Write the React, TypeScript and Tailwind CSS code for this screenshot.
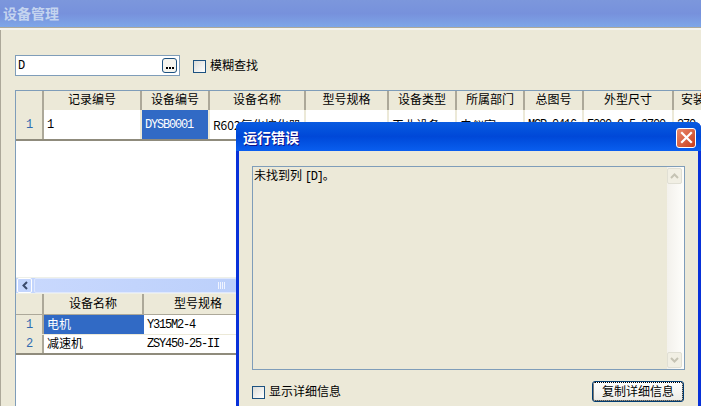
const cjk = "font-['Noto_Sans_CJK_SC','Liberation_Sans',sans-serif] text-[12px] leading-[14px]";
const latin = "font-['Liberation_Mono',monospace] text-[12px] leading-[14px] tracking-[-1.2px]";

const mainColumns = [
  { title: '记录编号', w: 'w-[98px]', value: '1', kind: 'latin' },
  { title: '设备编号', w: 'w-[68px]', value: 'DYSB0001', kind: 'selected' },
  { title: '设备名称', w: 'w-[96px]', value: 'R602氧化控化器', kind: 'cjk' },
  { title: '型号规格', w: 'w-[83px]', value: '', kind: 'cjk' },
  { title: '设备类型', w: 'w-[68px]', value: '工业设备', kind: 'cjk' },
  { title: '所属部门', w: 'w-[68px]', value: '电仪室', kind: 'cjk' },
  { title: '总图号', w: 'w-[59px]', value: 'MCP-0416', kind: 'latin' },
  { title: '外型尺寸', w: 'w-[90px]', value: 'F300.0.5-2700', kind: 'latin' },
  { title: '安装', w: 'w-[40px]', value: '370', kind: 'latin' },
];

const HeaderCell = ({ title, w, pad = 'pb-[2px]' }: { title: string; w: string; pad?: string }) => (
  <div className={`${w} ${pad} shrink-0 h-full flex items-center justify-center border-r-2 border-[#aca899] text-black ${cjk}`}>
    {title}
  </div>
);

const Checkbox = ({ label }: { label: string }) => (
  <div className="flex items-start gap-[4px]">
    <div className="mt-[2px] w-[13px] h-[13px] border border-[#1c5180] bg-gradient-to-br from-[#dcdcd7] to-white" />
    <span className={`${cjk} text-black`}>{label}</span>
  </div>
);

const ScrollArrow = ({ up }: { up: boolean }) => (
  <div className="w-[15px] h-[16px] rounded-[2px] border border-[#e0dfd4] bg-[#f1efe4] flex items-center justify-center">
    <svg width="9" height="6" viewBox="0 0 9 6">
      <path d={up ? 'M1 5 L4.5 1.5 L8 5' : 'M1 1 L4.5 4.5 L8 1'} fill="none" stroke="#c5c3b4" strokeWidth="2" />
    </svg>
  </div>
);

const ErrorDialog = () => (
  <div className="absolute left-[236px] top-[122px] w-[465px] h-[300px] flex flex-col rounded-t-[6px] bg-[#0831d9] overflow-hidden">
    <div className="h-[29px] shrink-0 flex items-center justify-between pl-[7px] pr-[5px] bg-gradient-to-b from-[#0a5be0] via-[#0048d8] to-[#0a5eef]">
      <span className={`${cjk} text-white font-bold text-[14px] [text-shadow:1px_1px_0_#0f1089]`}>运行错误</span>
      <div className="mt-[2px] w-[20px] h-[20px] rounded-[3px] border border-white bg-gradient-to-br from-[#e8886a] to-[#c93a14] flex items-center justify-center">
        <svg width="13" height="13" viewBox="0 0 13 13">
          <path d="M2 2 L11 11 M11 2 L2 11" stroke="white" strokeWidth="2.2" strokeLinecap="square" />
        </svg>
      </div>
    </div>
    <div className="flex-1 mx-[3px] bg-[#ece9d8] pl-[13px] pr-[13px] pt-[15px]">
      <div className="h-[204px] flex border border-[#7f9db9]">
        <div className={`flex-1 pl-[1px] pt-[1px] ${cjk} text-black`}>
          未找到列 <span className={latin}>[D]</span>。
        </div>
        <div className="w-[17px] flex flex-col justify-between items-start py-[1px] bg-gradient-to-r from-[#f3f1ec] to-[#fefefb]">
          <ScrollArrow up />
          <ScrollArrow up={false} />
        </div>
      </div>
      <div className="flex items-center justify-between mt-[11px] pr-[1px]">
        <Checkbox label="显示详细信息" />
        <div className={`w-[92px] h-[21px] rounded-[3px] border border-[#003c74] bg-gradient-to-b from-white to-[#ecebe5] flex items-center justify-center pb-[1px] text-black outline-1 outline-dotted -outline-offset-2 outline-black ${cjk}`}>
          复制详细信息
        </div>
      </div>
    </div>
  </div>
);

export default function App() {
  return (
    <div className="relative w-[701px] h-[406px] overflow-hidden bg-[#ece9d8]">
      <div className="h-[27px] flex items-center pl-[3px] pb-[1px] bg-gradient-to-b from-[#7c97dc] via-[#7791dc] to-[#7ea6e8]">
        <span className={`${cjk} font-bold text-[14px] text-[#c4d4ef]`}>设备管理</span>
      </div>
      <div className="h-[3px] border-t border-[#aca899] bg-[#f5f4ee]" />

      <div className="h-[376px] border-l border-[#aca899] pl-[14px] pt-[25px] flex flex-col">
        <div className="flex items-center h-[21px]">
          <div className="w-[165px] h-[21px] bg-white border border-[#7f9db9] flex items-center justify-between pl-[2px] pr-[2px]">
            <span className={`${latin} text-black`}>D</span>
            <div className="w-[15px] h-[15px] rounded-[3px] border border-[#1c5180] bg-[#f5f4ee] flex items-end justify-center pb-[3px] gap-[1px]">
              <i className="w-[2px] h-[2px] bg-black" />
              <i className="w-[2px] h-[2px] bg-black" />
              <i className="w-[2px] h-[2px] bg-black" />
            </div>
          </div>
          <div className="ml-[13px]">
            <Checkbox label="模糊查找" />
          </div>
        </div>

        <div className="mt-[14px] flex flex-col flex-1 border-l border-[#7f9db9]">
          <div className="h-[20px] flex border-t border-[#7f9db9]">
            <HeaderCell title="" w="w-[28px]" pad="pb-[3px]" />
            {mainColumns.map((c) => (
              <HeaderCell key={c.title} title={c.title} w={c.w} pad="pb-[3px]" />
            ))}
          </div>
          <div className="h-[31px] flex bg-white border-b-2 border-[#8f8b7c]">
            <div className={`w-[28px] shrink-0 flex items-center justify-center pt-[1px] bg-[#ece9d8] border-r-2 border-[#aca899] text-[#2f6bb0] ${latin}`}>1</div>
            {mainColumns.map((c) => (
              <div
                key={c.title}
                className={`${c.w} shrink-0 flex items-center pl-[3px] pt-[1px] whitespace-nowrap overflow-hidden border-r-2 border-[#ece9d8] ${
                  c.kind === 'selected' ? 'bg-[#316ac5] text-white' : 'text-black'
                } ${c.kind === 'cjk' ? cjk : latin}`}
              >
                {c.value}
              </div>
            ))}
          </div>
          <div className="h-[136px] bg-white" />

          <div className="h-[17px] flex items-center bg-[#c3d5fd] border-y border-[#eef0e8]">
            <div className="w-[15px] h-[15px] ml-[1px] rounded-[2px] bg-[#c3d5fd] border border-white flex items-center justify-center">
              <svg width="8" height="9" viewBox="0 0 8 9">
                <path d="M6 1 L2.5 4.5 L6 8" fill="none" stroke="#3a4a6b" strokeWidth="2" />
              </svg>
            </div>
            <div className="ml-[2px] w-[203px] h-[15px] rounded-[2px] bg-gradient-to-r from-[#c8d8fd] to-[#bcd0fb] border border-[#dfe8fd] flex items-center justify-end pr-[10px]">
              <svg width="8" height="7" viewBox="0 0 8 7">
                <path d="M0.5 0V7M2.5 0V7M4.5 0V7M6.5 0V7" stroke="#f0f4ff" strokeWidth="1" />
              </svg>
            </div>
          </div>

          <div className="h-[20px] flex">
            <HeaderCell title="" w="w-[28px]" />
            <HeaderCell title="设备名称" w="w-[100px]" />
            <HeaderCell title="型号规格" w="w-[110px]" />
          </div>
          <div className="h-[20px] flex bg-white border-t border-[#aca899]">
            <div className={`w-[28px] shrink-0 flex items-center justify-center bg-[#ece9d8] border-r-2 border-[#aca899] text-[#2f6bb0] ${latin}`}>1</div>
            <div className={`w-[100px] shrink-0 pl-[3px] pb-[2px] flex items-center bg-[#316ac5] text-white ${cjk}`}>电机</div>
            <div className={`w-[110px] shrink-0 pl-[3px] flex items-center text-black ${latin}`}>Y315M2-4</div>
          </div>
          <div className="h-[21px] flex bg-white border-t border-[#ece9d8] border-b-2 border-b-[#8f8b7c]">
            <div className={`w-[28px] shrink-0 flex items-center justify-center bg-[#ece9d8] border-r-2 border-[#aca899] text-[#2f6bb0] ${latin}`}>2</div>
            <div className={`w-[100px] shrink-0 pl-[3px] pb-[2px] flex items-center text-black ${cjk}`}>减速机</div>
            <div className={`w-[110px] shrink-0 pl-[3px] flex items-center text-black ${latin}`}>ZSY450-25-II</div>
          </div>
          <div className="flex-1 bg-white" />
        </div>
      </div>

      <ErrorDialog />
    </div>
  );
}
